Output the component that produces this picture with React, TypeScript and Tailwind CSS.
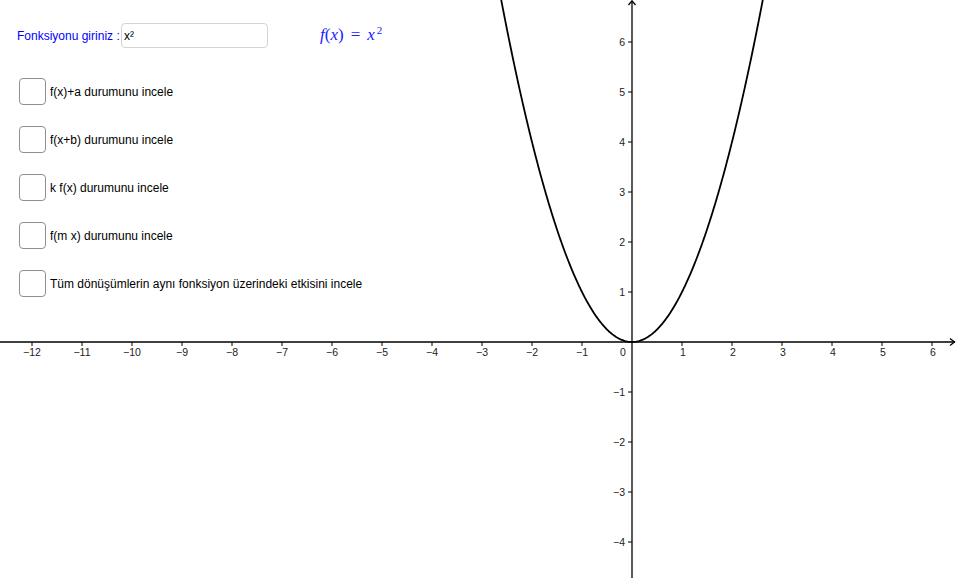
import React from "react";

const OX = 632;
const OY = 342;
const U = 50;

function Graph() {
  const pts: string[] = [];
  for (let i = 0; i <= 400; i++) {
    const x = -2.7 + (5.4 * i) / 400;
    const px = OX + x * U;
    const py = OY - x * x * U;
    pts.push(`${i === 0 ? "M" : "L"}${px.toFixed(2)},${py.toFixed(2)}`);
  }
  const xs: number[] = [];
  for (let k = -12; k <= 6; k++) if (k !== 0) xs.push(k);
  const ys: number[] = [];
  for (let k = -4; k <= 6; k++) if (k !== 0) ys.push(k);
  const fmt = (k: number) => (k < 0 ? `\u2212${-k}` : `${k}`);
  return (
    <svg className="absolute inset-0" width={957} height={578} viewBox="0 0 957 578">
      <g stroke="#000" strokeWidth={1.3} fill="none">
        <line x1={0} y1={OY} x2={955} y2={OY} />
        <line x1={OX} y1={578} x2={OX} y2={1} />
        <polyline points={`950,338.5 954.5,342 950,345.5`} />
        <polyline points={`628.5,5 632,0.8 635.5,5`} />
        {xs.map((k) => (
          <line key={"tx" + k} x1={OX + k * U} y1={OY} x2={OX + k * U} y2={OY + 4} strokeWidth={1} />
        ))}
        {ys.map((k) => (
          <line key={"ty" + k} x1={OX - 4} y1={OY - k * U} x2={OX} y2={OY - k * U} strokeWidth={1} />
        ))}
      </g>
      <g fill="#222" fontSize={10.5} style={{ fontFamily: '"Liberation Sans", Arial, sans-serif' }}>
        {xs.map((k) => (
          <text key={"lx" + k} x={OX + k * U + (k < 0 ? 0 : 1)} y={356} textAnchor="middle">
            {fmt(k)}
          </text>
        ))}
        {ys.map((k) => (
          <text key={"ly" + k} x={625} y={OY - k * U + 4} textAnchor="end">
            {fmt(k)}
          </text>
        ))}
        <text x={620} y={356}>0</text>
      </g>
      <path d={pts.join(" ")} stroke="#000" strokeWidth={1.8} fill="none" />
    </svg>
  );
}

function Check({ label }: { label: string }) {
  return (
    <div className="flex items-center h-[27px]">
      <div className="w-[27px] h-[27px] rounded-[4px] border-[1.5px] border-[#909090] bg-white" />
      <span className="ml-[4px] text-[12px] text-black">{label}</span>
    </div>
  );
}

export default function App() {
  return (
    <div
      className="relative w-[957px] h-[578px] bg-white overflow-hidden"
      style={{ fontFamily: '"Liberation Sans", Arial, sans-serif' }}
    >
      <Graph />
      <div className="relative flex flex-col pl-[19px] pt-[23px]">
        <div className="flex items-center h-[25px] -ml-[2px]">
          <span className="w-[104px] text-[12px] text-[#0000ff]">Fonksiyonu giriniz :</span>
          <div className="w-[147px] h-[25px] rounded-[4px] border-[1.5px] border-[#d4d4d4] bg-white flex items-center pl-[2px] text-[12px] text-black">
            x²
          </div>
          <span
            className="ml-[52px] -mt-[2px] text-[17px] italic text-[#2020ff] whitespace-nowrap"
            style={{ fontFamily: '"Liberation Serif", "Times New Roman", serif' }}
          >
            f<span className="not-italic">(</span>x<span className="not-italic">)</span>
            <span className="not-italic mx-[7px]">=</span>x<sup className="text-[11px] not-italic ml-[2px]">2</sup>
          </span>
        </div>
        <div className="flex flex-col gap-[21px] mt-[30px]">
          <Check label="f(x)+a durumunu incele" />
          <Check label="f(x+b) durumunu incele" />
          <Check label="k f(x) durumunu incele" />
          <Check label="f(m x) durumunu incele" />
          <Check label="Tüm dönüşümlerin aynı fonksiyon üzerindeki etkisini incele" />
        </div>
      </div>
    </div>
  );
}
